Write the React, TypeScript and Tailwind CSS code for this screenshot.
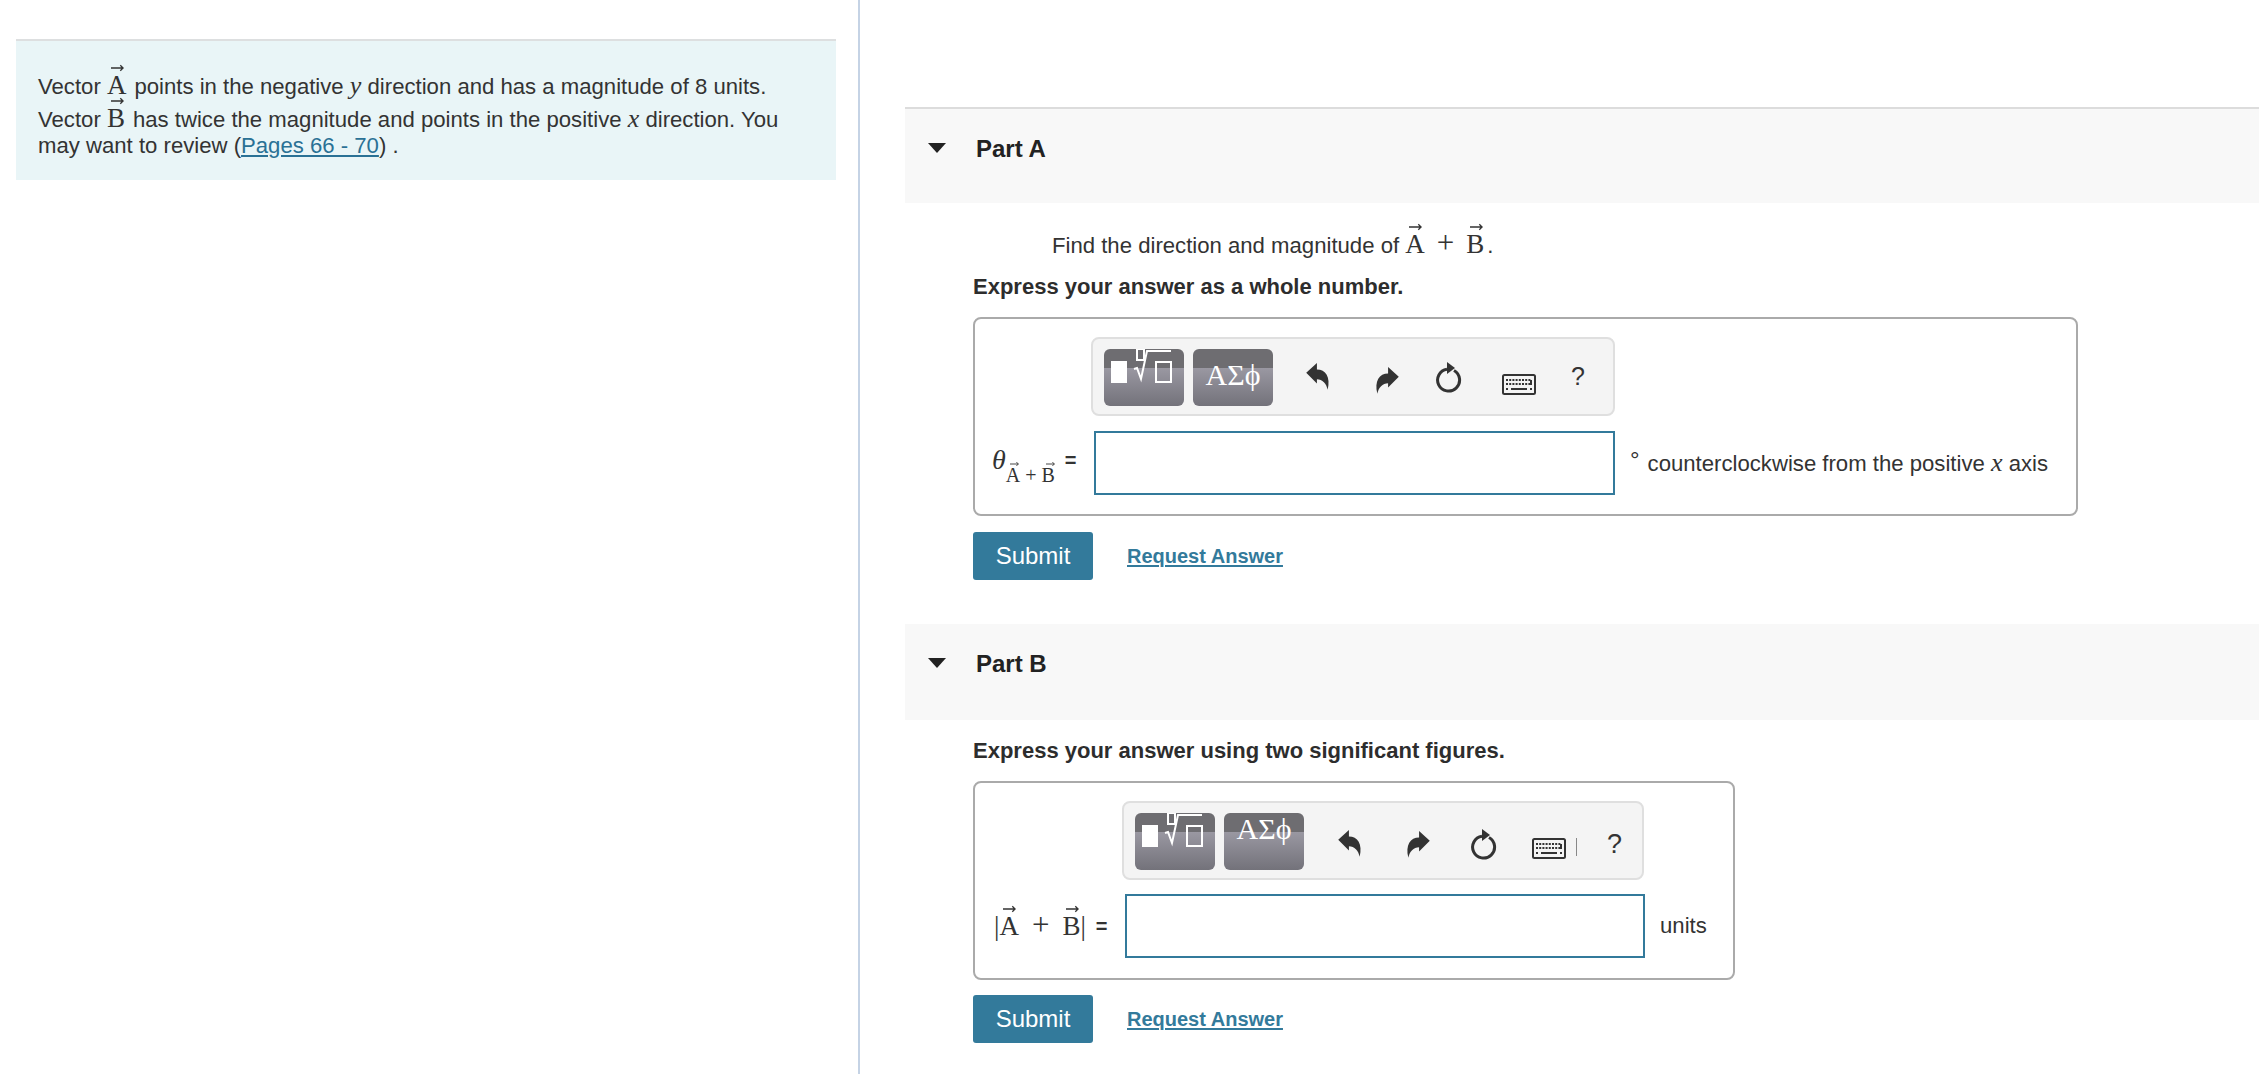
import type { ReactNode } from "react";

const serif = "font-['Liberation_Serif',serif]";

function Vec({ children, small }: { children: ReactNode; small?: boolean }) {
  return (
    <span className={`relative inline-block leading-none ${serif} ${small ? "text-[20px]" : "text-[27px]"}`}>
      <svg
        className={small ? "absolute left-[4px] top-[-4px] w-[9px] h-[6px]" : "absolute left-[4px] top-[-8px] w-[13px] h-[8px]"}
        viewBox="0 0 14 8"
        fill="none"
        stroke="#333"
        strokeWidth="1.4"
      >
        <path d="M0 4h13M10 1l3 3-3 3" />
      </svg>
      {children}
    </span>
  );
}

function Var({ children }: { children: ReactNode }) {
  return <span className={`${serif} italic text-[26px] leading-none`}>{children}</span>;
}

function RootButton() {
  return (
    <div className="w-[80px] h-[57px] mt-[2px] rounded-[6px] bg-[linear-gradient(#6e6d71_0,#6e6d71_33%,#9a98a2_33%,#73727a_100%)]">
      <svg width="80" height="57" viewBox="0 0 80 57" fill="none" stroke="#fff" strokeWidth="2">
        <rect x="7" y="12" width="16" height="22" fill="#fff" stroke="none" />
        <rect x="33" y="0" width="7" height="11" />
        <path d="M30 20l3-1 4 11 6-28h24" />
        <rect x="52" y="13" width="15" height="20" />
      </svg>
    </div>
  );
}

function GreekButton({ high }: { high?: boolean }) {
  return (
    <div
      className={`w-[80px] h-[57px] mt-[2px] rounded-[6px] bg-[linear-gradient(#6e6d71_0,#6e6d71_33%,#9a98a2_33%,#73727a_100%)] flex justify-center text-white text-[30px] leading-none ${serif} ${
        high ? "pt-[1px]" : "pt-[11px]"
      }`}
    >
      ΑΣϕ
    </div>
  );
}

function Undo({ flip }: { flip?: boolean }) {
  return (
    <svg width="26" height="30" viewBox="0 0 24 28" className={flip ? "-scale-x-100" : ""} fill="#333">
      <path d="M1 10l10-9v6c8 0 13 7 10 19-1-6-5-10-10-10v4z" />
    </svg>
  );
}

function Reset() {
  return (
    <svg width="28" height="32" viewBox="0 0 28 32" fill="none">
      <path d="M20 9.5A11 11 0 1 1 13 8.2" stroke="#333" strokeWidth="3" />
      <path d="M13 1l8 6-8 6z" fill="#333" />
    </svg>
  );
}

function Keyboard() {
  return (
    <svg width="34" height="21" viewBox="0 0 34 21" fill="none">
      <rect x="1" y="1" width="32" height="19" rx="1.5" stroke="#333" strokeWidth="2" />
      <path d="M4 6h25M4 10h25" stroke="#333" strokeWidth="2" strokeDasharray="2 1.2" />
      <path d="M9 15h16" stroke="#333" strokeWidth="2" />
      <path d="M4 15h2M28 15h2M29 6v5" stroke="#333" strokeWidth="2" />
    </svg>
  );
}

function Toolbar({ partB }: { partB?: boolean }) {
  return (
    <div
      className={`h-[79px] rounded-[8px] border-2 border-[#dfdfdf] bg-[#f4f4f4] flex items-center pl-[11px] ${
        partB ? "w-[522px]" : "w-[524px]"
      }`}
    >
      <RootButton />
      <div className="w-[9px]" />
      <GreekButton high={partB} />
      <div className={partB ? "w-[33px]" : "w-[32px]"} />
      <div className={partB ? "pt-[6px]" : ""}>
        <Undo />
      </div>
      <div className={partB ? "w-[42px]" : "w-[43px]"} />
      <div className="pt-[8px]">
        <Undo flip />
      </div>
      <div className="w-[34px]" />
      <div className={partB ? "w-[28px] ml-[4px] pt-[6px]" : "w-[28px]"}>
        <Reset />
      </div>
      <div className={partB ? "w-[35px]" : "w-[40px]"} />
      <div className="pt-[16px]">
        <Keyboard />
      </div>
      {partB ? <div className="w-[1px] h-[18px] bg-[#888] ml-[10px] mt-[12px]" /> : null}
      <div className={partB ? "ml-[30px] text-[#333] text-[27px] pt-[7px]" : "ml-[35px] text-[#333] text-[25px]"}>?</div>
    </div>
  );
}

function Actions({ gap }: { gap: string }) {
  return (
    <div className={`flex items-center ${gap}`}>
      <button className="w-[120px] h-[48px] rounded-[3px] bg-[#337a9b] text-white text-[24px]">Submit</button>
      <a className="ml-[34px] text-[#337a9b] text-[20px] font-bold underline underline-offset-2">Request Answer</a>
    </div>
  );
}

function PartHeader({ title, height }: { title: string; height: string }) {
  return (
    <div className={`${height} bg-[#f8f8f8] flex items-start pt-[22px] pl-[23px] text-[24px] font-bold text-[#222]`}>
      <svg width="18" height="10" viewBox="0 0 18 10" className="mt-[12px]" fill="#222">
        <path d="M0 0h18l-9 10z" />
      </svg>
      <span className="ml-[30px]">{title}</span>
    </div>
  );
}

export default function App() {
  return (
    <div className="flex h-[1074px] overflow-hidden bg-white text-[#333] text-[22.15px] font-['Liberation_Sans',Arial,sans-serif]">
      <div className="w-[860px] border-r-2 border-[#c5d3e5] pt-[39px] pl-4 pr-[22px] shrink-0">
        <div className="h-[141px] border-t-2 border-[#dddfe0] bg-[#e9f5f7] pl-[22px] pt-[29px] leading-[33px]">
          <div>
            Vector <Vec>A</Vec>
            <span className="ml-[8px]">points in the negative</span> <Var>y</Var> direction and has a magnitude of 8 units.
          </div>
          <div>
            Vector <Vec>B</Vec>
            <span className="ml-[8px]">has twice the magnitude and points in the positive</span> <Var>x</Var> direction. You
          </div>
          <div className="mt-[-7px]">
            may want to review (<a className="text-[#2a7195] underline">Pages 66 - 70</a>) .
          </div>
        </div>
      </div>

      <div className="flex-1 pl-[45px] pt-[107px]">
        <div className="border-t-2 border-[#dcdcdc]">
          <PartHeader title="Part A" height="h-[94px]" />
        </div>
        <div className="pl-[68px]">
          <div className="pl-[79px] pt-[24px] h-[69px] leading-[33px]">
            Find the direction and magnitude of <Vec>A</Vec>
            <span className={`mx-[12px] ${serif} text-[31px] leading-none`}>+</span>
            <Vec>B</Vec>
            <span className="ml-[3px]">.</span>
          </div>
          <div className="font-bold text-[22px] text-[#2d2d2d] h-[30px] leading-[30px]">Express your answer as a whole number.</div>
          <div className="mt-[15px] w-[1105px] h-[199px] rounded-[8px] border-2 border-[#aaa] pt-[18px]">
            <div className="ml-[116px]">
              <Toolbar />
            </div>
            <div className="flex items-center mt-[15px]">
              <div className="w-[119px] pl-[17px] flex items-start">
                <span className={`${serif} italic text-[28px] -mt-[3px]`}>θ</span>
                <span className={`mt-[23px] ${serif} whitespace-nowrap leading-none text-[20px]`}>
                  <Vec small>A</Vec>
                  <span className="mx-[5px]">+</span>
                  <Vec small>B</Vec>
                </span>
                <span className="ml-[10px] mt-[3px] text-[20px] font-bold">=</span>
              </div>
              <div className="w-[521px] h-[64px] border-2 border-[#337a9b] bg-white" />
              <div className="ml-[15px] -mt-[4px] whitespace-nowrap">
                <span className="text-[24px] align-[3px]">°</span>
                <span className="ml-[8px]">counterclockwise from the positive</span> <Var>x</Var> axis
              </div>
            </div>
          </div>
          <Actions gap="mt-[16px]" />
        </div>

        <div className="mt-[44px]">
          <PartHeader title="Part B" height="h-[96px]" />
        </div>
        <div className="pl-[68px]">
          <div className="font-bold text-[22px] text-[#2d2d2d] h-[30px] leading-[30px] mt-[16px]">Express your answer using two significant figures.</div>
          <div className="mt-[15px] w-[762px] h-[199px] rounded-[8px] border-2 border-[#aaa] pt-[18px]">
            <div className="ml-[147px]">
              <Toolbar partB />
            </div>
            <div className="flex items-center mt-[14px]">
              <div className="w-[150px] pl-[19px] flex items-center whitespace-nowrap">
                <span className={`${serif} text-[27px]`}>
                  |<Vec>A</Vec>
                  <span className="mx-[13px] text-[31px] leading-none">+</span>
                  <Vec>B</Vec>|
                </span>
                <span className="ml-[10px] text-[20px] font-bold">=</span>
              </div>
              <div className="w-[520px] h-[64px] border-2 border-[#337a9b] bg-white" />
              <div className="ml-[15px]">units</div>
            </div>
          </div>
          <Actions gap="mt-[15px]" />
        </div>
      </div>
    </div>
  );
}
